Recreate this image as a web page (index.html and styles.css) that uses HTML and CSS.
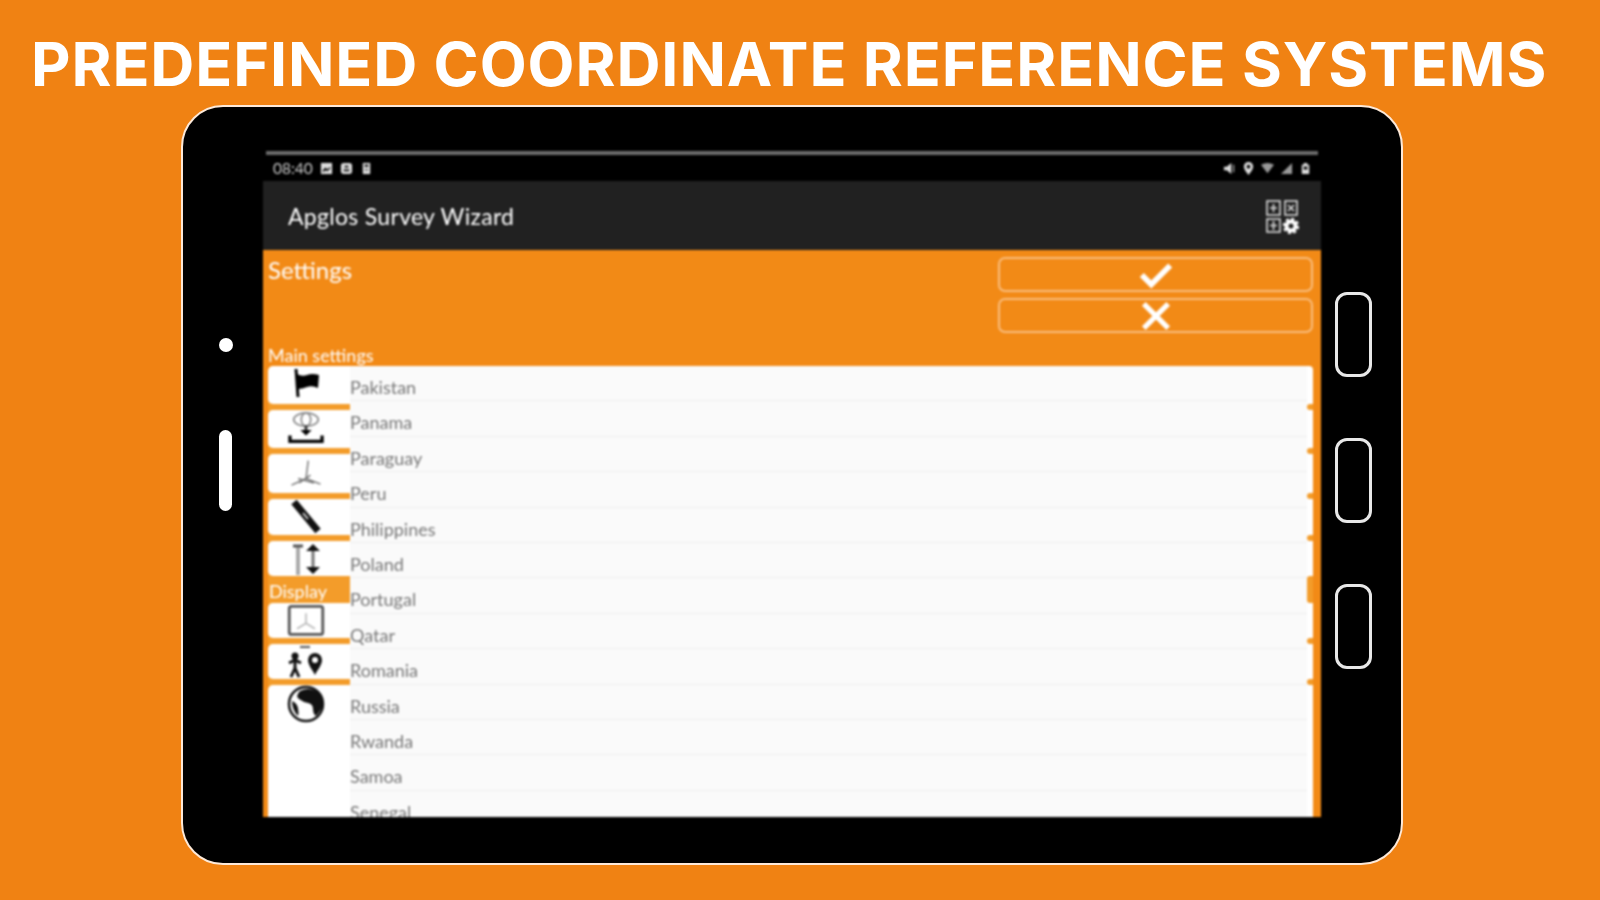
FILE: index.html
```html
<!DOCTYPE html>
<html lang="en">
<head>
  <meta charset="UTF-8">
  <title>Predefined Coordinate Reference Systems</title>
  <link rel="stylesheet" href="styles.css">
</head>
<body>
  <h1 class="headline">PREDEFINED COORDINATE REFERENCE SYSTEMS</h1>

  <div class="tablet">
    <!-- Left bezel with camera and speaker -->
    <div class="bezel bezel-left">
      <div class="camera"></div>
      <div class="speaker"></div>
    </div>

    <div class="screen">
      <div class="progress-line"></div>

      <div class="status-bar">
        <span class="clock">08:40</span>
        <svg class="status-icon" viewBox="0 0 14 14"><path fill="#ddd" d="M1 1h12v12H1z"/><path fill="#000" d="M3 9l3-3 2 2 3-3v2l-3 3-2-1-3 2z"/></svg>
        <svg class="status-icon" viewBox="0 0 14 14"><rect x="1" y="1" width="12" height="12" rx="3" fill="#ddd"/><path fill="#000" d="M5 4h4v2H5zM4 8h6v2H4z"/></svg>
        <svg class="status-icon" viewBox="0 0 14 14"><path fill="#ddd" d="M3 1h8v12H3z"/><path fill="#000" d="M5 3h4v2H5zM5 8h4v1H5z"/></svg>
        <div class="status-right">
          <svg class="status-icon" viewBox="0 0 14 14"><path fill="#ddd" d="M1 5h3l5-4v12L4 9H1zM11 3h1v8h-1z"/></svg>
          <svg class="status-icon" viewBox="0 0 14 14"><path fill="#ddd" fill-rule="evenodd" d="M7 0a5 5 0 0 1 5 5c0 3-3 6-5 9-2-3-5-6-5-9a5 5 0 0 1 5-5zm0 3a2 2 0 1 0 0 4 2 2 0 0 0 0-4z"/></svg>
          <svg class="status-icon" viewBox="0 0 14 14"><path fill="#999" d="M0 3q7-4 14 0L7 12z"/></svg>
          <svg class="status-icon" viewBox="0 0 14 14"><path fill="#999" d="M1 13L13 1v12z"/></svg>
          <svg class="status-icon" viewBox="0 0 14 14"><path fill="#ddd" d="M5 1h4v2h2v10H3V3h2z"/><path fill="#000" d="M5 5h4v3H5z"/></svg>
        </div>
      </div>

      <div class="app-bar">
        <span class="app-title">Apglos Survey Wizard</span>
        <svg class="app-action" viewBox="0 0 34 34" fill="none" stroke="#ddd" stroke-width="1.6">
          <rect x="2" y="2" width="13" height="14"/><path d="M8.500 5v8M5 9h7"/>
          <rect x="20" y="2" width="12" height="14"/><path d="M23 6l6 6M29 6l-6 6"/>
          <rect x="2" y="20" width="13" height="13"/><path d="M8.500 22v9M5 26.500h7"/>
          <circle cx="26" cy="27" r="4.500" stroke="#fff" stroke-width="4"/>
          <circle cx="26" cy="27" r="7" stroke="#fff" stroke-width="2.500" stroke-dasharray="3 2.500"/>
        </svg>
      </div>

      <div class="settings-head">
        <div class="settings-titles">
          <div class="settings-title">Settings</div>
          <div class="settings-sub">Main settings</div>
        </div>
        <div class="settings-buttons">
          <div class="outline-btn">
            <svg class="btn-icon" viewBox="0 0 36 30"><path d="M3 15l10 10L33 5" fill="none" stroke="#fff" stroke-width="6"/></svg>
          </div>
          <div class="outline-btn">
            <svg class="btn-icon" viewBox="0 0 32 32"><path d="M3 3l26 26M29 3L3 29" fill="none" stroke="#fff" stroke-width="5.500"/></svg>
          </div>
        </div>
      </div>

      <div class="content">
        <!-- Settings icon column -->
        <div class="side-menu">
          <div class="tile tile-a">
            <svg class="tile-icon" viewBox="0 0 38 34"><path d="M9 1l2 28" stroke="#000" stroke-width="3"/><path d="M10 6q5 3 10 1t12 0l-1 13q-6-3-11-1t-9 2z" fill="#000"/></svg>
          </div>
          <div class="rule"></div>
          <div class="tile tile-b">
            <svg class="tile-icon" viewBox="0 0 40 36" fill="none" stroke="#888" stroke-width="1.800">
              <ellipse cx="20" cy="8" rx="13" ry="7"/><ellipse cx="20" cy="8" rx="5" ry="7"/>
              <path d="M20 14v6" stroke="#333" stroke-width="3"/><path d="M14 19h12l-6 6z" fill="#000" stroke="none"/>
              <path d="M3 25v6h34v-6" stroke="#000" stroke-width="3.500"/>
            </svg>
          </div>
          <div class="rule"></div>
          <div class="tile tile-c">
            <svg class="tile-icon" viewBox="0 0 34 30" fill="none" stroke="#777" stroke-width="1.300">
              <path d="M19 3l-2 16M17 19L4 25M17 19l13 5M10 19l14 4M21 16l-10 7"/>
            </svg>
          </div>
          <div class="rule"></div>
          <div class="tile tile-d">
            <svg class="tile-icon" viewBox="0 0 36 34"><path d="M6 2L30 31" stroke="#111" stroke-width="7"/><path d="M15 13l5 6" stroke="#bbb" stroke-width="2"/></svg>
          </div>
          <div class="rule"></div>
          <div class="tile tile-e">
            <svg class="tile-icon" viewBox="0 0 36 34">
              <path d="M10 4v29" stroke="#aaa" stroke-width="4"/><path d="M5 4h10" stroke="#555" stroke-width="3"/>
              <path d="M25 6v22" stroke="#777" stroke-width="3"/><path d="M18 9l7-7 7 7zM18 25l7 7 7-7z" fill="#111"/>
            </svg>
          </div>
          <div class="side-heading">Display</div>
          <div class="tile tile-f">
            <svg class="tile-icon" viewBox="0 0 34 30" fill="none">
              <rect x="2" y="2" width="30" height="25" rx="2" stroke="#555" stroke-width="2.500"/>
              <path d="M17 8v9M17 17l-8 5M17 17l8 5" stroke="#bbb" stroke-width="1.500"/>
            </svg>
          </div>
          <div class="rule"></div>
          <div class="tile tile-g">
            <svg class="tile-icon tile-icon-wide" viewBox="0 0 40 34">
              <circle cx="9" cy="11" r="3.500" fill="#111"/>
              <path d="M3 18l6-3 6 3M9 15v8M9 23l-4 9M9 23l4 9" stroke="#111" stroke-width="3" fill="none"/>
              <path fill="#111" fill-rule="evenodd" d="M29 8a7 7 0 0 1 7 7c0 5-4 9-7 15-3-6-7-10-7-15a7 7 0 0 1 7-7zm0 4a3 3 0 1 0 0 6 3 3 0 0 0 0-6z"/>
              <path d="M14 2h10" stroke="#555" stroke-width="2"/>
            </svg>
          </div>
          <div class="rule"></div>
          <div class="tile tile-h">
            <svg class="tile-globe" viewBox="0 0 38 38">
              <circle cx="19" cy="19" r="17" fill="#fff" stroke="#111" stroke-width="2.500"/>
              <path fill="#111" d="M13 6q8-4 16 0t7 13q-1 5-7 12-3-2-3-7t-5-6-9-4 1-8zM5 16q5 2 6 7t0 8q-6-6-6-15z"/>
            </svg>
          </div>
        </div>

        <!-- Country list -->
        <ul class="country-list">
          <li class="country">Pakistan</li>
          <li class="country">Panama</li>
          <li class="country">Paraguay</li>
          <li class="country">Peru</li>
          <li class="country">Philippines</li>
          <li class="country">Poland</li>
          <li class="country">Portugal</li>
          <li class="country">Qatar</li>
          <li class="country">Romania</li>
          <li class="country">Russia</li>
          <li class="country">Rwanda</li>
          <li class="country">Samoa</li>
          <li class="country">Senegal</li>
        </ul>

        <!-- Orange ticks down the right side of the list -->
        <div class="list-rail">
          <div class="tick tick-a"></div>
          <div class="tick tick-b"></div>
          <div class="tick tick-c"></div>
          <div class="tick tick-d"></div>
          <div class="tick tick-e"></div>
          <div class="tick tick-f"></div>
          <div class="tick tick-g"></div>
        </div>
      </div>
    </div>

    <!-- Right bezel with hardware keys -->
    <div class="bezel bezel-right">
      <div class="hw-key"></div>
      <div class="hw-key"></div>
      <div class="hw-key"></div>
    </div>
  </div>
</body>
</html>
```

FILE: styles.css
```css
* {
  box-sizing: border-box;
}

html, body {
  margin: 0;
  padding: 0;
  height: 100%;
  overflow: hidden;
}

body {
  background-color: #f08213;
  font-family: "Lato", "Liberation Sans", sans-serif;
  display: flex;
  flex-direction: column;
}

.headline {
  margin: 0;
  height: 105px;
  padding: 24px 0 0 31px;
  font-family: "Inter", "Liberation Sans", sans-serif;
  font-size: 61px;
  line-height: 80px;
  font-weight: 700;
  letter-spacing: 0.900px;
  color: #fff;
  white-space: nowrap;
  filter: blur(0.6px);
}

.tablet {
  width: 1222px;
  height: 760px;
  margin-left: 181px;
  display: flex;
  background-color: #000;
  border: 2px solid #fde9d8;
  border-radius: 42px;
  overflow: hidden;
}

.bezel {
  flex: none;
  display: flex;
  flex-direction: column;
  align-items: center;
}

.bezel-left {
  width: 80px;
  padding: 231px 0 0 5px;
}

.bezel-right {
  width: 79px;
  padding: 185px 15px 0 0;
  gap: 61px;
}

.camera {
  width: 14px;
  height: 14px;
  border-radius: 50%;
  background-color: #fff;
}

.speaker {
  width: 13px;
  height: 81px;
  margin-top: 78px;
  border-radius: 7px;
  background-color: #fff;
}

.hw-key {
  width: 37px;
  height: 85px;
  border: 3px solid #e8e8e8;
  border-radius: 12px;
}

.screen {
  width: 1058px;
  height: 666px;
  margin-top: 44px;
  display: flex;
  flex-direction: column;
  background-color: #f28a16;
  filter: blur(0.8px);
}

.progress-line {
  height: 4px;
  flex: none;
  background-color: #6b6b6b;
  border: solid #000;
  border-width: 0 3px;
}

.status-bar {
  height: 26px;
  flex: none;
  display: flex;
  align-items: center;
  gap: 7px;
  padding: 0 9px 0 10px;
  background-color: #000;
}

.status-right {
  margin-left: auto;
  display: flex;
  align-items: center;
  gap: 6px;
}

.clock {
  font-size: 15.500px;
  color: #ccc;
}

.status-icon {
  width: 13px;
  height: 13px;
}

.app-bar {
  height: 69px;
  flex: none;
  display: flex;
  align-items: center;
  justify-content: space-between;
  padding: 0 22px 0 25px;
  background-color: #212121;
}

.app-title {
  font-size: 23px;
  letter-spacing: 0.3px;
  color: #fff;
}

.app-action {
  width: 34px;
  height: 36px;
}

.settings-head {
  height: 116px;
  flex: none;
  display: flex;
  justify-content: space-between;
  padding: 7px 8px 0 5px;
}

.settings-titles {
  display: flex;
  flex-direction: column;
  justify-content: space-between;
  padding-bottom: 2px;
}

.settings-title {
  font-size: 24px;
  line-height: 26px;
  color: #fff;
}

.settings-sub {
  font-size: 18px;
  line-height: 18px;
  color: #fff;
}

.settings-buttons {
  width: 315px;
  display: flex;
  flex-direction: column;
  gap: 6px;
}

.outline-btn {
  height: 35px;
  display: flex;
  align-items: center;
  justify-content: center;
  border: 2px solid #f9bd7e;
  border-radius: 7px;
}

.btn-icon {
  width: 34px;
  height: 30px;
}

.content {
  flex: 1;
  min-height: 0;
  display: flex;
  margin: 0 8px 0 5px;
  overflow: hidden;
  background-color: #f39c2a;
  border-radius: 4px 4px 0 0;
}

.side-menu {
  width: 82px;
  flex: none;
  display: flex;
  flex-direction: column;
}

.tile {
  background-color: #fff;
  display: flex;
  align-items: center;
  justify-content: center;
  border-radius: 5px 0 0 5px;
}

.tile-a { height: 38px; }
.tile-b { height: 38px; }
.tile-c { height: 39px; }
.tile-d { height: 36px; }
.tile-e { height: 35px; }
.tile-f { height: 35px; }
.tile-g { height: 35px; }

.tile-h {
  flex: 1;
  align-items: flex-start;
  border-radius: 5px 0 0 0;
}

.rule {
  height: 6px;
  flex: none;
  background-color: #f39c2a;
  border-radius: 0 3px 3px 0;
}

.tile-icon {
  width: 38px;
  height: 34px;
  margin-right: 7px;
}

.tile-icon-wide {
  width: 40px;
}

.tile-globe {
  width: 38px;
  height: 38px;
  margin-right: 7px;
}

.side-heading {
  height: 27px;
  flex: none;
  padding-left: 1px;
  font-size: 18px;
  line-height: 30px;
  color: #fff;
}

.country-list {
  flex: 1;
  margin: 0;
  padding: 0;
  list-style: none;
  background-color: #fafafa;
}

.country {
  height: 35.400px;
  padding-top: 4px;
  font-size: 18px;
  line-height: 35px;
  color: #777;
  border-bottom: 1px solid #eeeeee;
  white-space: nowrap;
}

.list-rail {
  width: 6px;
  flex: none;
  display: flex;
  flex-direction: column;
  background-color: #fff;
}

.tick {
  width: 6px;
  height: 6px;
  flex: none;
  background-color: #f39c2a;
  border-radius: 3px 0 0 3px;
}

.tick-a { margin-top: 38px; }
.tick-b { margin-top: 38px; }
.tick-c { margin-top: 39px; }
.tick-d { margin-top: 36px; }

.tick-e {
  height: 27px;
  margin-top: 35px;
}

.tick-f { margin-top: 35px; }
.tick-g { margin-top: 35px; }
```
